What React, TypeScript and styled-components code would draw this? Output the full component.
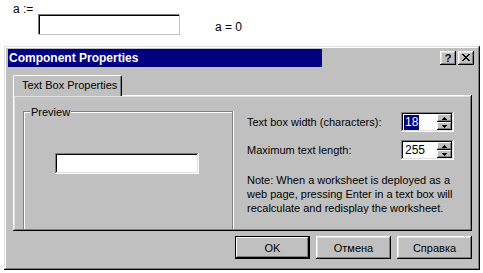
import React from "react";
import styled, { createGlobalStyle } from "styled-components";

const Global = createGlobalStyle`
  html, body { margin: 0; padding: 0; background: #fff; }
  body {
    font-family: "Liberation Sans", Arial, sans-serif;
    font-size: 11px;
    color: #000;
  }
  * { box-sizing: border-box; }
`;

const Page = styled.div`
  width: 483px;
  height: 273px;
  overflow: hidden;
  background: #fff;
`;

/* ---------- worksheet ---------- */
const Worksheet = styled.div`
  display: flex;
  align-items: flex-start;
  height: 46px;
  font-size: 12px;
`;

const MathLabel = styled.span`
  width: 38px;
  padding-left: 13px;
  padding-top: 2px;
  line-height: 14px;
`;

const WorksheetInput = styled.div`
  margin-top: 14px;
  width: 142px;
  height: 21px;
  background: #fff;
  box-shadow: inset -1px -1px #c0c0c0, inset 1px 1px #808080,
    inset 2px 2px #000;
`;

const MathResult = styled.span`
  margin-left: 35px;
  margin-top: 20px;
  line-height: 14px;
`;

/* ---------- dialog ---------- */
const Dialog = styled.div`
  margin-left: 4px;
  width: 476px;
  height: 224px;
  background: #c0c0c0;
  box-shadow: inset -1px -1px #000, inset 1px 1px #dfdfdf,
    inset -2px -2px #808080, inset 2px 2px #fff;
  padding: 3px 4px 0 4px;
  display: flex;
  flex-direction: column;
`;

const TitleRow = styled.div`
  display: flex;
  align-items: center;
  height: 18px;
`;

const TitleBar = styled.div`
  width: 314px;
  height: 18px;
  background: #000080;
  color: #fff;
  font-weight: bold;
  font-size: 12px;
  padding-left: 1px;
  display: flex;
  align-items: center;
  line-height: 18px;
`;

const CaptionButtons = styled.div`
  margin-left: auto;
  margin-right: 2px;
  display: flex;
  gap: 2px;
`;

const CaptionButton = styled.div`
  width: 16px;
  height: 14px;
  background: #c0c0c0;
  box-shadow: inset -1px -1px #000, inset 1px 1px #fff,
    inset -2px -2px #808080, inset 2px 2px #dfdfdf;
  display: flex;
  align-items: center;
  justify-content: center;
  font-weight: bold;
  font-size: 11px;
  line-height: 14px;
  padding-bottom: 1px;
`;

const Content = styled.div`
  margin: 8px 4px 0 5px;
  display: flex;
  flex-direction: column;
`;

const TabStrip = styled.div`
  display: flex;
  height: 20px;
`;

const Tab = styled.div`
  position: relative;
  z-index: 1;
  width: 109px;
  height: 21px;
  background: #c0c0c0;
  border-top: 1px solid #fff;
  border-left: 1px solid #fff;
  border-right: 1px solid #000;
  border-radius: 2px 2px 0 0;
  box-shadow: inset -1px 0 #808080;
  padding-left: 8px;
  line-height: 18px;
  white-space: nowrap;
`;

const Panel = styled.div`
  height: 136px;
  box-shadow: inset -1px -1px #000, inset 1px 1px #fff,
    inset -2px -2px #808080, inset 2px 2px #dfdfdf;
  display: flex;
  padding: 16px 0 0 10px;
  overflow: hidden;
`;

const GroupBox = styled.div`
  position: relative;
  width: 210px;
  height: 118px;
  border: 1px solid #808080;
  border-bottom: none;
  box-shadow: inset 1px 1px #fff, 1px 0 #fff;
  padding: 41px 0 0 31px;
`;

const Legend = styled.span`
  position: absolute;
  top: -6px;
  left: 6px;
  padding: 0 1px;
  background: #c0c0c0;
  line-height: 13px;
`;

const SunkenInput = styled.div`
  width: 144px;
  height: 21px;
  background: #fff;
  box-shadow: inset -1px -1px #fff, inset 1px 1px #808080,
    inset -2px -2px #dfdfdf, inset 2px 2px #000;
`;

const RightColumn = styled.div`
  margin-left: 14px;
  display: flex;
  flex-direction: column;
  padding-top: 1px;
`;

const FieldRow = styled.div`
  display: grid;
  grid-template-columns: 154px 53px;
  align-items: center;
  height: 20px;
  margin-bottom: 8px;
  white-space: nowrap;
`;

const SpinBox = styled.div`
  width: 53px;
  height: 20px;
  background: #fff;
  box-shadow: inset -1px -1px #fff, inset 1px 1px #808080,
    inset -2px -2px #dfdfdf, inset 2px 2px #000;
  padding: 2px;
  display: flex;
`;

const SpinValue = styled.div`
  flex: 1;
  padding-left: 1px;
  display: flex;
  align-items: center;
  font-size: 12px;
`;

const Selected = styled.span<{ $active?: boolean }>`
  background: ${(p) => (p.$active ? "#000080" : "transparent")};
  color: ${(p) => (p.$active ? "#fff" : "#000")};
  padding: 0 1px;
  line-height: 15px;
`;

const SpinButtons = styled.div`
  width: 15px;
  display: flex;
  flex-direction: column;
`;

const SpinButton = styled.div`
  flex: 1;
  background: #c0c0c0;
  box-shadow: inset -1px -1px #000, inset 1px 1px #fff,
    inset -2px -2px #808080;
  display: flex;
  align-items: center;
  justify-content: center;
`;

const Note = styled.div`
  margin-top: 5px;
  line-height: 14px;
  white-space: nowrap;
`;

const ButtonRow = styled.div`
  margin-top: 5px;
  display: flex;
  justify-content: flex-end;
  gap: 6px;
`;

const Button = styled.div<{ $default?: boolean }>`
  width: 75px;
  height: 23px;
  background: #c0c0c0;
  display: flex;
  align-items: center;
  justify-content: center;
  box-shadow: ${(p) =>
    p.$default
      ? "inset 0 0 0 1px #000, inset -2px -2px #000, inset 2px 2px #fff, inset -3px -3px #808080"
      : "inset -1px -1px #000, inset 1px 1px #fff, inset -2px -2px #808080, inset 2px 2px #dfdfdf"};
`;

const CloseIcon = () => (
  <svg width="8" height="7" viewBox="0 0 8 7" shapeRendering="crispEdges">
    <path
      d="M0 0h2v1H0zM6 0h2v1H6zM1 1h2v1H1zM5 1h2v1H5zM2 2h4v1H2zM3 3h2v1H3zM2 4h4v1H2zM1 5h2v1H1zM5 5h2v1H5zM0 6h2v1H0zM6 6h2v1H6z"
      fill="#000"
    />
  </svg>
);

const Arrow = ({ up }: { up?: boolean }) => (
  <svg width="5" height="3" viewBox="0 0 5 3" shapeRendering="crispEdges">
    <path
      d={up ? "M2 0h1v1H2zM1 1h3v1H1zM0 2h5v1H0z" : "M0 0h5v1H0zM1 1h3v1H1zM2 2h1v1H2z"}
      fill="#000"
    />
  </svg>
);

const Spin = ({ value, active }: { value: string; active?: boolean }) => (
  <SpinBox>
    <SpinValue>
      <Selected $active={active}>{value}</Selected>
    </SpinValue>
    <SpinButtons>
      <SpinButton>
        <Arrow up />
      </SpinButton>
      <SpinButton>
        <Arrow />
      </SpinButton>
    </SpinButtons>
  </SpinBox>
);

export default function App() {
  return (
    <Page>
      <Global />
      <Worksheet>
        <MathLabel>a :=</MathLabel>
        <WorksheetInput />
        <MathResult>a = 0</MathResult>
      </Worksheet>
      <Dialog>
        <TitleRow>
          <TitleBar>Component Properties</TitleBar>
          <CaptionButtons>
            <CaptionButton>?</CaptionButton>
            <CaptionButton>
              <CloseIcon />
            </CaptionButton>
          </CaptionButtons>
        </TitleRow>
        <Content>
          <TabStrip>
            <Tab>Text Box Properties</Tab>
          </TabStrip>
          <Panel>
            <GroupBox>
              <Legend>Preview</Legend>
              <SunkenInput />
            </GroupBox>
            <RightColumn>
              <FieldRow>
                <span>Text box width (characters):</span>
                <Spin value="18" active />
              </FieldRow>
              <FieldRow>
                <span>Maximum text length:</span>
                <Spin value="255" />
              </FieldRow>
              <Note>
                Note: When a worksheet is deployed as a
                <br />
                web page, pressing Enter in a text box will
                <br />
                recalculate and redisplay the worksheet.
              </Note>
            </RightColumn>
          </Panel>
          <ButtonRow>
            <Button $default>OK</Button>
            <Button>Отмена</Button>
            <Button>Справка</Button>
          </ButtonRow>
        </Content>
      </Dialog>
    </Page>
  );
}
